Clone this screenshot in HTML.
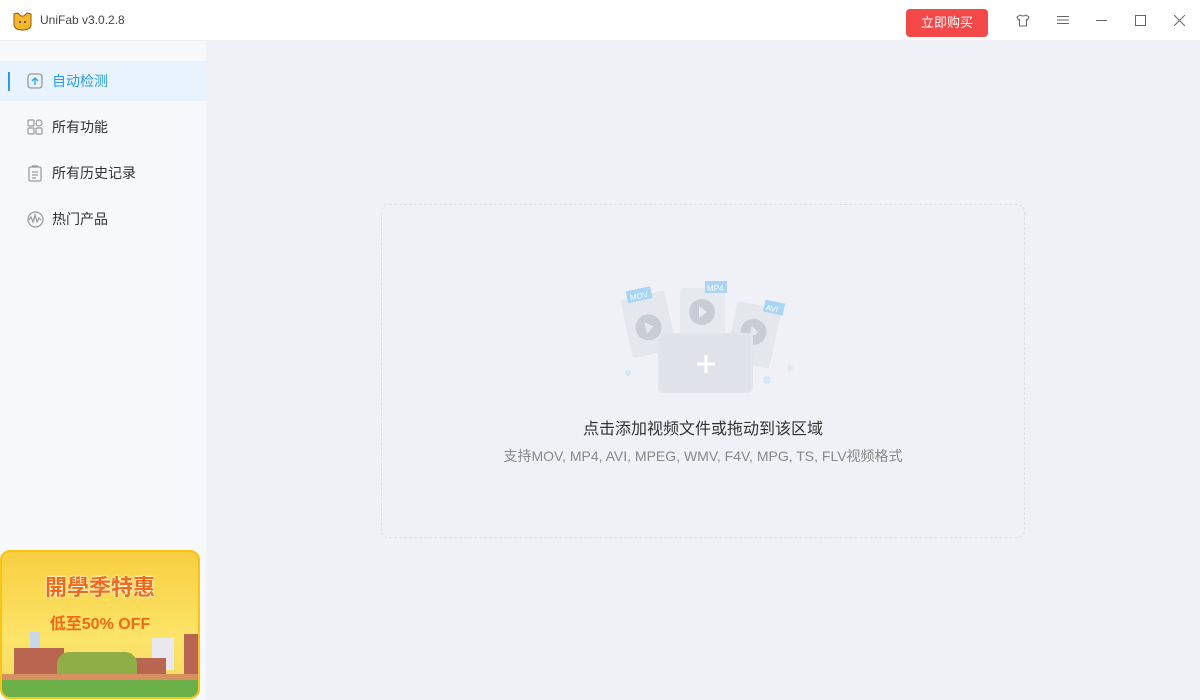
<!DOCTYPE html>
<html><head><meta charset="utf-8"><style>
*{margin:0;padding:0;box-sizing:border-box}
body{width:1200px;height:700px;overflow:hidden;background:#fff;font-family:"Liberation Sans","Noto Sans CJK SC",sans-serif;position:relative}
.title{position:absolute;left:0;top:0;width:1200px;height:41px;background:#fff;border-bottom:1px solid #eef0f4}
.side{position:absolute;left:0;top:41px;width:206px;height:659px;background:#f7f8fa}
.main{position:absolute;left:206px;top:41px;width:994px;height:659px;background:#eff1f6}
.item{position:absolute;left:0;width:206px;height:40px;font-size:14px;color:#333;line-height:40px;padding-left:52px}
.item svg{position:absolute;left:27px;top:12px}
.act{background:#e8f3fd;color:#2a9cf0}
.act:before{content:"";position:absolute;left:8px;top:11px;width:2px;height:19px;background:#2a9cf0}
.drop{position:absolute;left:381px;top:204px;width:644px;height:334px;border:1.5px dashed #dde0e6;border-radius:8px}
</style></head><body>
<div class="title">
 <svg style="position:absolute;left:12px;top:10px" width="21" height="21" viewBox="0 0 21 21"><path d="M2 4 L6 3 L9 6 L12 6 L15 3 L19 4 L19 14 Q19 20 10.5 20 Q2 20 2 14Z" fill="#f6b82a" stroke="#8a5a10" stroke-width="1"/><circle cx="8" cy="12" r="1" fill="#333"/><circle cx="13" cy="12" r="1" fill="#333"/></svg>
 <div style="position:absolute;left:40px;top:13px;font-size:12px;color:#444">UniFab v3.0.2.8</div>
 <div style="position:absolute;left:906px;top:9px;width:82px;height:28px;background:#f54848;border-radius:4px;color:#fff;font-size:13px;text-align:center;line-height:28px">立即购买</div>
 <svg style="position:absolute;left:1016px;top:14px" width="14" height="13" viewBox="0 0 14 13" fill="none" stroke="#666"><path d="M4 1 L1 3 L2.5 6 L3.5 5.5 L3.5 12 L10.5 12 L10.5 5.5 L11.5 6 L13 3 L10 1 Q7 3 4 1Z"/></svg>
 <svg style="position:absolute;left:1057px;top:15px" width="12" height="10" stroke="#666"><path d="M0 1.5H12M0 5H12M0 8.5H12"/></svg>
 <div style="position:absolute;left:1096px;top:20px;width:11px;height:1px;background:#666"></div>
 <div style="position:absolute;left:1135px;top:15px;width:11px;height:11px;border:1px solid #666"></div>
 <svg style="position:absolute;left:1174px;top:15px" width="11" height="11" stroke="#666"><path d="M0 0L11 11M11 0L0 11"/></svg>
</div>
<div class="side">
 <div class="item act" style="top:20px"><svg width="16" height="16" fill="none" stroke="#8aa" stroke-width="1.3"><rect x="1" y="1" width="14" height="14" rx="3" stroke="#999"/><path d="M8 12V5M5 8l3-3 3 3" stroke="#2a9cf0"/></svg>自动检测</div>
 <div class="item" style="top:66px"><svg width="16" height="16" fill="none" stroke="#999" stroke-width="1.2"><rect x="1" y="1" width="6" height="6" rx="1"/><rect x="9" y="1" width="6" height="6" rx="3"/><rect x="1" y="9" width="6" height="6" rx="1"/><rect x="9" y="9" width="6" height="6" rx="1"/></svg>所有功能</div>
 <div class="item" style="top:112px"><svg width="16" height="17" fill="none" stroke="#999" stroke-width="1.2"><rect x="2" y="2" width="12" height="14" rx="1.5"/><path d="M5 1h6M5 7h6M5 10h6M5 13h4"/></svg>所有历史记录</div>
 <div class="item" style="top:158px"><svg width="17" height="17" fill="none" stroke="#999" stroke-width="1.2"><circle cx="8.5" cy="8.5" r="7.5"/><path d="M2 9l2-3 2 5 2-7 2 7 2-4 2 2"/></svg>热门产品</div>
 <div style="position:absolute;left:0;top:509px;width:200px;height:149px;border:2px solid #fbc218;border-radius:10px;overflow:hidden;background:linear-gradient(#f8cf40,#fce46a 60%,#f5d860)">
  <div style="position:absolute;left:0;top:18px;width:196px;text-align:center;font-size:22px;font-weight:bold;color:#f06a18;text-shadow:0 0 2px #fff,0 0 2px #fff">開學季特惠</div>
  <div style="position:absolute;left:0;top:58px;width:196px;text-align:center;font-size:16px;font-weight:bold;color:#f06a18">低至50% OFF</div>
  <div style="position:absolute;left:28px;top:80px;width:10px;height:24px;background:#c8d8e8"></div>
  <div style="position:absolute;left:12px;top:96px;width:50px;height:28px;background:#b96650"></div>
  <div style="position:absolute;left:150px;top:86px;width:22px;height:32px;background:#e8e8ee"></div>
  <div style="position:absolute;left:130px;top:106px;width:34px;height:18px;background:#b96650"></div>
  <div style="position:absolute;left:182px;top:82px;width:14px;height:40px;background:#b96650"></div>
  <div style="position:absolute;left:55px;top:100px;width:80px;height:22px;background:#8fae48;border-radius:12px 12px 0 0"></div>
  <div style="position:absolute;left:0;top:122px;width:196px;height:6px;background:#d89060"></div>
  <div style="position:absolute;left:0;top:128px;width:196px;height:21px;background:#6cb04a"></div>
 </div>
</div>
<div class="main"></div>
<div class="drop"></div>
<svg style="position:absolute;left:600px;top:270px" width="210" height="130">
 <g transform="rotate(-12 45 50)"><rect x="25" y="25" width="45" height="60" rx="3" fill="#e4e7ec"/><circle cx="47" cy="58" r="13" fill="#c8ccd4"/><path d="M44 52l8 6-8 6z" fill="#e4e7ec"/><rect x="32" y="18" width="25" height="12" fill="#a8d4f5"/><text x="35" y="28" font-size="8" fill="#fff" font-family="Liberation Sans">MOV</text></g>
 <rect x="80" y="18" width="45" height="55" rx="3" fill="#e6e9ee"/><circle cx="102" cy="42" r="13" fill="#c8ccd4"/><path d="M99 36l8 6-8 6z" fill="#e6e9ee"/><rect x="105" y="11" width="22" height="12" fill="#a8d4f5"/><text x="107" y="21" font-size="8" fill="#fff" font-family="Liberation Sans">MP4</text>
 <g transform="rotate(12 155 55)"><rect x="133" y="35" width="45" height="60" rx="3" fill="#e4e7ec"/><circle cx="155" cy="62" r="13" fill="#c8ccd4"/><path d="M152 56l8 6-8 6z" fill="#e4e7ec"/><rect x="160" y="28" width="20" height="12" fill="#a8d4f5"/><text x="162" y="38" font-size="8" fill="#fff" font-family="Liberation Sans">AVI</text></g>
 <rect x="58" y="63" width="95" height="60" rx="5" fill="#e2e5ea"/>
 <rect x="60" y="65" width="91" height="57" rx="5" fill="#dfe3e9"/>
 <path d="M106 85v18M97 94h18" stroke="#fff" stroke-width="3"/>
 <circle cx="28" cy="103" r="3" fill="#d6e6f6"/><circle cx="167" cy="110" r="4" fill="#d6e6f6"/><circle cx="190" cy="98" r="3" fill="#e0e8f2"/>
</svg>
<div style="position:absolute;left:381px;top:415px;width:644px;text-align:center;font-size:16px;color:#333">点击添加视频文件或拖动到该区域</div>
<div style="position:absolute;left:381px;top:446px;width:644px;text-align:center;font-size:14px;color:#888">支持MOV, MP4, AVI, MPEG, WMV, F4V, MPG, TS, FLV视频格式</div>
</body></html>
